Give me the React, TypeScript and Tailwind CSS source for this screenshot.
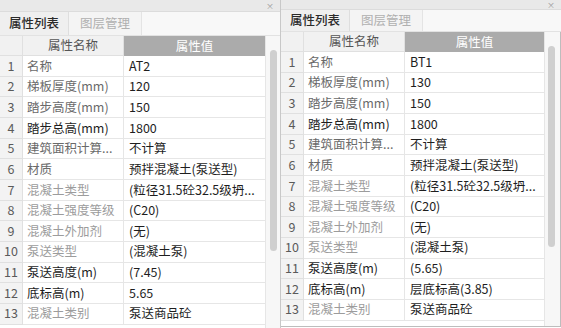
import React from "react";

type Row = { name: string; tone: "d" | "m" | "l"; value: string };

const leftRows: Row[] = [
  { name: "名称", tone: "m", value: "AT2" },
  { name: "梯板厚度(mm)", tone: "m", value: "120" },
  { name: "踏步高度(mm)", tone: "m", value: "150" },
  { name: "踏步总高(mm)", tone: "d", value: "1800" },
  { name: "建筑面积计算...", tone: "m", value: "不计算" },
  { name: "材质", tone: "m", value: "预拌混凝土(泵送型)" },
  { name: "混凝土类型", tone: "l", value: "(粒径31.5砼32.5级坍..." },
  { name: "混凝土强度等级", tone: "l", value: "(C20)" },
  { name: "混凝土外加剂", tone: "l", value: "(无)" },
  { name: "泵送类型", tone: "l", value: "(混凝土泵)" },
  { name: "泵送高度(m)", tone: "d", value: "(7.45)" },
  { name: "底标高(m)", tone: "d", value: "5.65" },
  { name: "混凝土类别", tone: "l", value: "泵送商品砼" },
];

const rightVals = ["BT1", "130", "150", "1800", "不计算", "预拌混凝土(泵送型)", "(粒径31.5砼32.5级坍...", "(C20)", "(无)", "(混凝土泵)", "(5.65)", "层底标高(3.85)", "泵送商品砼"];
const rightRows: Row[] = leftRows.map((r, i) => ({ ...r, value: rightVals[i] }));

const toneClass = {
  d: "text-[#1e1e1e]",
  m: "text-[#6a6a6a]",
  l: "text-[#9c9c9c]",
};

function Panel({
  rows,
  titleH,
  tabH,
  valueW,
  scrollW,
  right,
}: {
  rows: Row[];
  titleH: string;
  tabH: string;
  valueW: string;
  scrollW: string;
  right?: boolean;
}) {
  return (
    <div className={"flex flex-col w-[280px] " + (right ? "h-[327px] border-b border-[#bdbdbd]" : "h-[328px]")}>
      <div className={"flex items-center justify-end bg-[#e9e9e9] border-b border-[#dcdcdc] pr-[6px] " + titleH}>
        <span className="text-[8px] leading-[8px] text-[#9a9a9a]">×</span>
      </div>
      <div className={"flex bg-[#f8f8f8] border-b border-[#e2e2e2] " + tabH}>
        <div className="flex items-center px-[9px] bg-[#efefef] border-r border-[#dedede] text-[12.5px] text-[#2a2a2a] font-medium">
          属性列表
        </div>
        <div className="flex items-center px-[11px] bg-[#f4f4f4] border-r border-[#e4e4e4] text-[12.5px] text-[#b0b0b0]">
          图层管理
        </div>
        <div className="flex-1" />
      </div>
      <div className="flex flex-1 min-h-0">
        <div className="flex flex-col flex-1 min-w-0">
          <div className="flex h-[20px] text-[12.5px] leading-none">
            <div className="w-[23px] bg-[#f1f1f1] border-r border-b border-[#e0e0e0]" />
            <div className="w-[101px] bg-[#f1f1f1] border-r border-b border-[#e0e0e0] flex items-center justify-center text-[#555]">
              属性名称
            </div>
            <div className={"bg-[#ababab] flex items-center justify-center text-white " + valueW}>属性值</div>
          </div>
          {rows.map((r, i) => (
            <div key={i} className="flex h-[20.67px] text-[12.5px] leading-none">
              <div className="w-[23px] bg-[#f3f3f3] border-r border-b border-[#e0e0e0] flex items-center justify-center text-[#5a5a5a]">
                {i + 1}
              </div>
              <div
                className={
                  "w-[101px] bg-white border-r border-b border-[#e6e6e6] flex items-center pl-[4px] whitespace-nowrap overflow-hidden " +
                  toneClass[r.tone]
                }
              >
                {r.name}
              </div>
              <div
                className={
                  "bg-white border-b border-[#e6e6e6] flex items-center pl-[5px] whitespace-nowrap overflow-hidden text-[#1e1e1e] " +
                  valueW
                }
              >
                {r.value}
              </div>
            </div>
          ))}
        </div>
        <div
          className={
            "flex flex-col items-center bg-[#f7f7f7] border-l border-[#e6e6e6] pt-[14px] " +
            scrollW +
            (right ? " pr-[3px] border-r border-r-[#bdbdbd]" : "")
          }
        >
          <div className="w-[7px] h-[201px] rounded-[4px] bg-[#cfcfcf]" />
        </div>
      </div>
    </div>
  );
}

export default function App() {
  return (
    <div
      className="flex w-[561px] h-[328px] bg-white overflow-hidden"
      style={{ fontFamily: '"Noto Sans CJK SC", "Noto Sans", sans-serif' }}
    >
      <Panel rows={leftRows} titleH="h-[12px]" tabH="h-[24px]" valueW="w-[141px]" scrollW="w-[15px]" />
      <div className="w-px bg-[#c8c8c8]" />
      <Panel rows={rightRows} titleH="h-[10px]" tabH="h-[22px]" valueW="w-[139px]" scrollW="w-[17px]" right />
    </div>
  );
}
